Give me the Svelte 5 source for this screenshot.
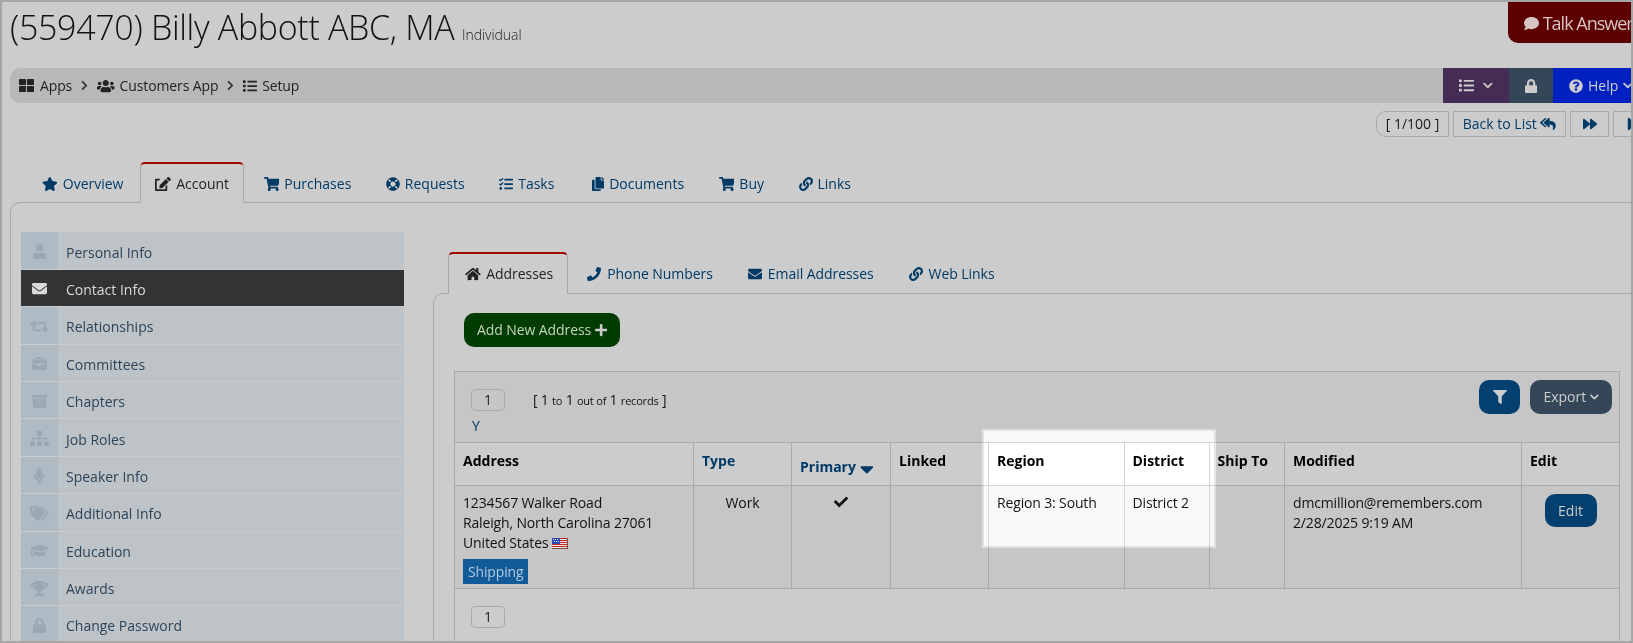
<script>
  const icons = {
    star: [576, 'M259.3 17.8L194 150.2 47.9 171.5c-26.2 3.8-36.7 36.1-17.7 54.6l105.7 103-25 145.5c-4.5 26.3 23.2 46 46.4 33.7L288 439.6l130.7 68.7c23.2 12.2 50.9-7.4 46.4-33.7l-25-145.5 105.7-103c19-18.5 8.5-50.8-17.7-54.6L382 150.2 316.7 17.8c-11.7-23.6-45.6-23.9-57.4 0z'],
    cart: [576, 'M528.12 301.319l47.273-208C578.806 78.301 567.391 64 551.99 64H159.208l-9.166-44.81C147.758 8.021 137.93 0 126.529 0H24C10.745 0 0 10.745 0 24v16c0 13.255 10.745 24 24 24h69.883l70.248 343.435C147.325 417.1 136 435.222 136 456c0 30.928 25.072 56 56 56s56-25.072 56-56c0-15.674-6.447-29.835-16.824-40h209.647C430.447 426.165 424 440.326 424 456c0 30.928 25.072 56 56 56s56-25.072 56-56c0-22.172-12.888-41.332-31.579-50.405l5.517-24.276c3.413-15.018-8.002-29.319-23.403-29.319H218.117l-6.545-32h293.145c11.206 0 20.92-7.754 23.403-18.681z'],
    envelope: [512, 'M502.3 190.8c3.9-3.1 9.7-.2 9.7 4.7V400c0 26.5-21.5 48-48 48H48c-26.5 0-48-21.5-48-48V195.6c0-5 5.7-7.8 9.7-4.7 22.4 17.4 52.1 39.5 154.1 113.6 21.1 15.4 56.7 47.8 92.2 47.6 35.7.3 72-32.8 92.3-47.6 102-74.1 131.6-96.3 154-113.7zM256 320c23.2.4 56.6-29.2 73.4-41.4 132.7-96.3 142.8-104.7 173.4-128.7 5.8-4.5 9.2-11.5 9.2-18.9v-19c0-26.5-21.5-48-48-48H48C21.5 64 0 85.5 0 112v19c0 7.4 3.4 14.3 9.2 18.9 30.6 23.9 40.7 32.4 173.4 128.7 16.8 12.2 50.2 41.8 73.4 41.4z'],
    check: [512, 'M173.898 439.404l-166.4-166.4c-9.997-9.997-9.997-26.206 0-36.204l36.203-36.204c9.997-9.998 26.207-9.998 36.204 0L192 312.69 432.095 72.596c9.997-9.997 26.207-9.997 36.204 0l36.203 36.204c9.997 9.997 9.997 26.206 0 36.204l-294.4 294.401c-9.998 9.997-26.207 9.997-36.204-.001z'],
    plus: [448, 'M416 208H272V64c0-17.67-14.33-32-32-32h-32c-17.67 0-32 14.33-32 32v144H32c-17.67 0-32 14.33-32 32v32c0 17.67 14.33 32 32 32h144v144c0 17.67 14.33 32 32 32h32c17.67 0 32-14.33 32-32V304h144c17.67 0 32-14.33 32-32v-32c0-17.67-14.33-32-32-32z'],
    user: [448, 'M224 256c70.7 0 128-57.3 128-128S294.7 0 224 0 96 57.3 96 128s57.3 128 128 128zm89.6 32h-16.7c-22.2 10.2-46.9 16-72.9 16s-50.6-5.8-72.9-16h-16.7C60.2 288 0 348.2 0 422.4V464c0 26.5 21.5 48 48 48h352c26.5 0 48-21.5 48-48v-41.6c0-74.2-60.2-134.4-134.4-134.4z'],
    link: [512, 'M326.612 185.391c59.747 59.809 58.927 155.698.36 214.59-.11.12-.24.25-.36.37l-67.2 67.2c-59.27 59.27-155.699 59.262-214.96 0-59.27-59.26-59.27-155.7 0-214.96l37.106-37.106c9.84-9.84 26.786-3.3 27.294 10.606.648 17.722 3.826 35.527 9.69 52.721 1.986 5.822.567 12.262-3.783 16.612l-13.087 13.087c-28.026 28.026-28.905 73.66-1.155 101.96 28.024 28.579 74.086 28.749 102.325.51l67.2-67.19c28.191-28.191 28.073-73.757 0-101.83-3.701-3.694-7.429-6.564-10.341-8.569a16.037 16.037 0 0 1-6.947-12.606c-.396-10.567 3.348-21.456 11.698-29.806l21.054-21.055c5.521-5.521 14.182-6.199 20.584-1.731a152.482 152.482 0 0 1 20.522 17.197zM467.547 44.449c-59.261-59.262-155.69-59.27-214.96 0l-67.2 67.2c-.12.12-.25.25-.36.37-58.566 58.892-59.387 154.781.36 214.59a152.454 152.454 0 0 0 20.521 17.196c6.402 4.468 15.064 3.789 20.584-1.731l21.054-21.055c8.35-8.35 12.094-19.239 11.698-29.806a16.037 16.037 0 0 0-6.947-12.606c-2.912-2.005-6.64-4.875-10.341-8.569-28.073-28.073-28.191-73.639 0-101.83l67.2-67.19c28.239-28.239 74.3-28.069 102.325.51 27.75 28.3 26.872 73.934-1.155 101.96l-13.087 13.087c-4.35 4.35-5.769 10.79-3.783 16.612 5.864 17.194 9.042 34.999 9.69 52.721.509 13.906 17.454 20.446 27.294 10.606l37.106-37.106c59.271-59.259 59.271-155.699.001-214.959z'],
    lock: [448, 'M400 224h-24v-72C376 68.2 307.8 0 224 0S72 68.2 72 152v72H48c-26.5 0-48 21.5-48 48v192c0 26.5 21.5 48 48 48h352c26.5 0 48-21.5 48-48V272c0-26.5-21.5-48-48-48zm-104 0H152v-72c0-39.7 32.3-72 72-72s72 32.3 72 72v72z'],
    filter: [512, 'M487.976 0H24.028C2.71 0-8.047 25.866 7.058 40.971L192 225.941V432c0 7.831 3.821 15.17 10.237 19.662l80 55.98C298.02 518.69 320 507.493 320 487.98V225.941l184.947-184.97C520.021 25.896 509.338 0 487.976 0z'],
    down: [448, 'M207.029 381.476L12.686 187.132c-9.373-9.373-9.373-24.569 0-33.941l22.667-22.667c9.357-9.357 24.522-9.375 33.901-.04L224 284.505l154.745-154.021c9.379-9.335 24.544-9.317 33.901.04l22.667 22.667c9.373 9.373 9.373 24.569 0 33.941L240.971 381.476c-9.373 9.372-24.569 9.372-33.942 0z'],
    right: [320, 'M285.476 272.971L91.132 467.314c-9.373 9.373-24.569 9.373-33.941 0l-22.667-22.667c-9.357-9.357-9.375-24.522-.04-33.901L188.505 256 34.484 101.255c-9.335-9.379-9.317-24.544.04-33.901l22.667-22.667c9.373-9.373 24.569-9.373 33.941 0L285.475 239.03c9.373 9.372 9.373 24.568.001 33.941z'],
    grid: [512, 'M296 32h192c13.255 0 24 10.745 24 24v160c0 13.255-10.745 24-24 24H296c-13.255 0-24-10.745-24-24V56c0-13.255 10.745-24 24-24zm-80 0H24C10.745 32 0 42.745 0 56v160c0 13.255 10.745 24 24 24h192c13.255 0 24-10.745 24-24V56c0-13.255-10.745-24-24-24zM0 296v160c0 13.255 10.745 24 24 24h192c13.255 0 24-10.745 24-24V296c0-13.255-10.745-24-24-24H24c-13.255 0-24 10.745-24 24zm296 184h192c13.255 0 24-10.745 24-24V296c0-13.255-10.745-24-24-24H296c-13.255 0-24 10.745-24 24v160c0 13.255 10.745 24 24 24z'],
    users: [640, 'M96 224c35.3 0 64-28.7 64-64s-28.7-64-64-64-64 28.7-64 64 28.7 64 64 64zm448 0c35.3 0 64-28.7 64-64s-28.7-64-64-64-64 28.7-64 64 28.7 64 64 64zm32 32h-64c-17.6 0-33.5 7.1-45.1 18.6 40.3 22.1 68.9 62 75.1 109.4h66c17.7 0 32-14.3 32-32v-32c0-35.3-28.7-64-64-64zm-256 0c61.9 0 112-50.1 112-112S381.9 32 320 32 208 82.1 208 144s50.1 112 112 112zm76.8 32h-8.3c-20.8 10-43.9 16-68.5 16s-47.6-6-68.5-16h-8.3C179.6 288 128 339.6 128 403.2V432c0 26.5 21.5 48 48 48h288c26.5 0 48-21.5 48-48v-28.8c0-63.6-51.6-115.2-115.2-115.2zm-223.7-13.4C161.5 263.1 145.6 256 128 256H64c-35.3 0-64 28.7-64 64v32c0 17.7 14.3 32 32 32h65.9c6.3-47.4 34.9-87.3 75.2-109.4z'],
    list: [512, 'M80 368H16a16 16 0 0 0-16 16v64a16 16 0 0 0 16 16h64a16 16 0 0 0 16-16v-64a16 16 0 0 0-16-16zm0-320H16A16 16 0 0 0 0 64v64a16 16 0 0 0 16 16h64a16 16 0 0 0 16-16V64a16 16 0 0 0-16-16zm0 160H16a16 16 0 0 0-16 16v64a16 16 0 0 0 16 16h64a16 16 0 0 0 16-16v-64a16 16 0 0 0-16-16zm416 176H176a16 16 0 0 0-16 16v32a16 16 0 0 0 16 16h320a16 16 0 0 0 16-16v-32a16 16 0 0 0-16-16zm0-320H176a16 16 0 0 0-16 16v32a16 16 0 0 0 16 16h320a16 16 0 0 0 16-16V80a16 16 0 0 0-16-16zm0 160H176a16 16 0 0 0-16 16v32a16 16 0 0 0 16 16h320a16 16 0 0 0 16-16v-32a16 16 0 0 0-16-16z'],
    comment: [512, 'M256 32C114.6 32 0 125.1 0 240c0 49.6 21.4 95 57 130.7C44.5 421.1 2.7 466 2.2 466.5c-2.2 2.3-2.8 5.7-1.5 8.7S4.8 480 8 480c66.3 0 116-31.8 140.6-51.4 32.7 12.3 69 19.4 107.4 19.4 141.4 0 256-93.1 256-208S397.4 32 256 32z'],
    help: [512, 'M504 256c0 136.997-111.043 248-248 248S8 392.997 8 256C8 119.083 119.043 8 256 8s248 111.083 248 248zM262.655 90c-54.497 0-89.255 22.957-116.549 63.758-3.536 5.286-2.353 12.415 2.715 16.258l34.699 26.31c5.205 3.947 12.621 3.008 16.665-2.122 17.864-22.658 30.113-35.797 57.303-35.797 20.429 0 45.698 13.148 45.698 32.958 0 14.976-12.363 22.667-32.534 33.976C247.128 238.528 216 254.941 216 296v4c0 6.627 5.373 12 12 12h56c6.627 0 12-5.373 12-12v-1.333c0-28.462 83.186-29.647 83.186-106.667 0-58.002-60.165-102-116.531-102zM256 338c-25.365 0-46 20.635-46 46 0 25.364 20.635 46 46 46s46-20.636 46-46c0-25.365-20.635-46-46-46z'],
    forward: [512, 'M500.5 231.4l-192-160C287.9 54.3 256 68.6 256 96v320c0 27.4 31.9 41.8 52.5 24.6l192-160c15.3-12.8 15.3-36.4 0-49.2zm-256 0l-192-160C31.9 54.3 0 68.6 0 96v320c0 27.4 31.9 41.8 52.5 24.6l192-160c15.3-12.8 15.3-36.4 0-49.2z'],
    step: [448, 'M384 44v424c0 6.6-5.4 12-12 12h-48c-6.6 0-12-5.4-12-12V291.6l-195.5 181C95.9 489.7 64 475.4 64 448V64c0-27.4 31.9-41.7 52.5-24.6L312 219.3V44c0-6.6 5.4-12 12-12h48c6.6 0 12 5.4 12 12z'],
    replyall: [576, 'M136.309 189.836L312.313 37.851C327.72 24.546 352 35.348 352 56.015v82.763c129.182 10.231 224 52.212 224 183.548 0 61.441-39.582 122.309-83.333 154.132-13.653 9.931-33.111-2.533-28.077-18.631 38.512-123.162-3.922-169.482-112.59-182.015v84.175c0 20.701-24.3 31.453-39.687 18.164L136.309 226.164c-11.071-9.561-11.086-26.753 0-36.328zm-128 36.328L184.313 378.149C199.7 391.439 224 380.687 224 359.986v-15.818l-108.606-93.785A55.96 55.96 0 0 1 96 207.998a55.953 55.953 0 0 1 19.393-42.38L224 71.832V56.015c0-20.667-24.28-31.469-39.687-18.164L8.309 189.836c-11.086 9.575-11.071 26.767 0 36.328z'],
    edit: [576, 'M402.6 83.2l90.2 90.2c3.8 3.8 3.8 10 0 13.8L274.4 405.6l-92.8 10.3c-12.4 1.4-22.9-9.1-21.5-21.5l10.3-92.8L388.8 83.2c3.8-3.8 10-3.8 13.8 0zm162-22.9l-48.8-48.8c-15.2-15.2-39.9-15.2-55.2 0l-35.4 35.4c-3.8 3.8-3.8 10 0 13.8l90.2 90.2c3.8 3.8 10 3.8 13.8 0l35.4-35.4c15.2-15.3 15.2-40 0-55.2zM384 346.2V448H64V128h73.1c3.2 0 6.2-1.3 8.5-3.5l40-40c7.6-7.6 2.2-20.5-8.5-20.5H48C21.5 64 0 85.5 0 112v352c0 26.5 21.5 48 48 48h352c26.5 0 48-21.5 48-48V306.2c0-10.7-12.9-16-20.5-8.5l-40 40c-2.2 2.3-3.5 5.3-3.5 8.5z'],
    lifering: [512, 'M256 8C119.033 8 8 119.033 8 256s111.033 248 248 248 248-111.033 248-248S392.967 8 256 8zm173.696 119.559l-63.399 63.399c-10.987-18.559-26.67-34.252-45.255-45.255l63.399-63.399a218.396 218.396 0 0 1 45.255 45.255zM256 352c-53.019 0-96-42.981-96-96s42.981-96 96-96 96 42.981 96 96-42.981 96-96 96zM127.559 82.304l63.399 63.399c-18.559 10.987-34.252 26.67-45.255 45.255l-63.399-63.399a218.372 218.372 0 0 1 45.255-45.255zM82.304 384.441l63.399-63.399c10.987 18.559 26.67 34.252 45.255 45.255l-63.399 63.399a218.396 218.396 0 0 1-45.255-45.255zm302.137 45.255l-63.399-63.399c18.559-10.987 34.252-26.67 45.255-45.255l63.399 63.399a218.403 218.403 0 0 1-45.255 45.255z'],
    tasks: [512, 'M139.61 35.5a12 12 0 0 0-17 0L58.93 98.81l-22.7-22.12a12 12 0 0 0-17 0L3.53 92.41a12 12 0 0 0 0 17l47.59 47.4a12.78 12.78 0 0 0 17.61 0l15.59-15.62L156.52 69a12.09 12.09 0 0 0 .09-17zm0 159.19a12 12 0 0 0-17 0l-63.68 63.72-22.7-22.1a12 12 0 0 0-17 0L3.53 252a12 12 0 0 0 0 17L51 316.5a12.77 12.77 0 0 0 17.6 0l15.7-15.69 72.2-72.22a12 12 0 0 0 .09-16.9zM64 368c-26.49 0-48.59 21.5-48.59 48S37.53 464 64 464a48 48 0 0 0 0-96zm432 16H208a16 16 0 0 0-16 16v32a16 16 0 0 0 16 16h288a16 16 0 0 0 16-16v-32a16 16 0 0 0-16-16zm0-320H208a16 16 0 0 0-16 16v32a16 16 0 0 0 16 16h288a16 16 0 0 0 16-16V80a16 16 0 0 0-16-16zm0 160H208a16 16 0 0 0-16 16v32a16 16 0 0 0 16 16h288a16 16 0 0 0 16-16v-32a16 16 0 0 0-16-16z'],
    copy: [448, 'M320 448v40c0 13.255-10.745 24-24 24H24c-13.255 0-24-10.745-24-24V120c0-13.255 10.745-24 24-24h72v296c0 30.879 25.121 56 56 56h168zm0-344V0H152c-13.255 0-24 10.745-24 24v368c0 13.255 10.745 24 24 24h272c13.255 0 24-10.745 24-24V128H344c-13.2 0-24-10.8-24-24zm120.971-31.029L375.029 7.029A24 24 0 0 0 358.059 0H352v96h96v-6.059a24 24 0 0 0-7.029-16.97z'],
    home: [576, 'M280.37 148.26L96 300.11V464a16 16 0 0 0 16 16l112.06-.29a16 16 0 0 0 15.92-16V368a16 16 0 0 1 16-16h64a16 16 0 0 1 16 16v95.64a16 16 0 0 0 16 16.05L464 480a16 16 0 0 0 16-16V300L295.67 148.26a12.19 12.19 0 0 0-15.3 0zM571.6 251.47L488 182.56V44.05a12 12 0 0 0-12-12h-56a12 12 0 0 0-12 12v72.61L318.47 43a48 48 0 0 0-61 0L4.34 251.47a12 12 0 0 0-1.6 16.9l25.5 31A12 12 0 0 0 45.15 301l235.22-193.74a12.19 12.19 0 0 1 15.3 0L530.9 301a12 12 0 0 0 16.9-1.6l25.5-31a12 12 0 0 0-1.7-16.93z'],
    phone: [512, 'M493.4 24.6l-104-24c-11.3-2.6-22.9 3.3-27.5 13.9l-48 112c-4.2 9.8-1.4 21.3 6.9 28l60.6 49.6c-36 76.7-98.9 140.5-177.2 177.2l-49.6-60.6c-6.8-8.3-18.2-11.1-28-6.9l-112 48C3.9 366.5-2 378.1.6 389.4l24 104C27.1 504.2 36.7 512 48 512c256.1 0 464-207.5 464-464 0-11.2-7.7-20.9-18.6-23.4z'],
    retweet: [640, 'M629.657 343.598L528.971 444.284c-9.373 9.372-24.568 9.372-33.941 0L394.343 343.598c-9.373-9.373-9.373-24.569 0-33.941l10.823-10.823c9.562-9.562 25.133-9.34 34.419.492L480 342.118V160H292.451a24.005 24.005 0 0 1-16.971-7.029l-16-16C244.361 121.851 255.069 96 276.451 96H520c13.255 0 24 10.745 24 24v222.118l40.416-42.792c9.285-9.831 24.856-10.054 34.419-.492l10.823 10.823c9.372 9.372 9.372 24.569-.001 33.941zm-265.138 15.431A23.999 23.999 0 0 0 347.548 352H160V169.881l40.416 42.792c9.286 9.831 24.856 10.054 34.419.491l10.822-10.822c9.373-9.373 9.373-24.569 0-33.941L144.971 67.716c-9.373-9.373-24.569-9.373-33.941 0L10.343 168.402c-9.373 9.373-9.373 24.569 0 33.941l10.822 10.822c9.563 9.563 25.134 9.34 34.419-.491L96 169.881V392c0 13.255 10.745 24 24 24h243.549c21.382 0 32.09-25.851 16.971-40.971l-16.001-16z'],
    briefcase: [512, 'M320 336c0 8.84-7.16 16-16 16h-96c-8.84 0-16-7.16-16-16v-48H0v144c0 25.6 22.4 48 48 48h416c25.6 0 48-22.4 48-48V288H320v48zm144-208h-80V80c0-25.6-22.4-48-48-48H176c-25.6 0-48 22.4-48 48v48H48c-25.6 0-48 22.4-48 48v80h512v-80c0-25.6-22.4-48-48-48zm-144 0H192V96h128v32z'],
    archive: [512, 'M32 448c0 17.7 14.3 32 32 32h384c17.7 0 32-14.3 32-32V160H32v288zm160-212c0-6.6 5.4-12 12-12h104c6.6 0 12 5.4 12 12v8c0 6.6-5.4 12-12 12H204c-6.6 0-12-5.4-12-12v-8zM480 32H32C14.3 32 0 46.3 0 64v48c0 8.8 7.2 16 16 16h480c8.8 0 16-7.2 16-16V64c0-17.7-14.3-32-32-32z'],
    sitemap: [640, 'M128 352H32c-17.67 0-32 14.33-32 32v96c0 17.67 14.33 32 32 32h96c17.67 0 32-14.33 32-32v-96c0-17.67-14.33-32-32-32zm-24-80h192v48h48v-48h192v48h48v-57.59c0-21.17-17.23-38.41-38.41-38.41H344v-64h40c17.67 0 32-14.33 32-32V32c0-17.67-14.33-32-32-32H256c-17.67 0-32 14.33-32 32v96c0 17.67 14.33 32 32 32h40v64H94.41C73.23 224 56 241.23 56 262.41V320h48v-48zm264 80h-96c-17.67 0-32 14.33-32 32v96c0 17.67 14.33 32 32 32h96c17.67 0 32-14.33 32-32v-96c0-17.67-14.33-32-32-32zm240 0h-96c-17.67 0-32 14.33-32 32v96c0 17.67 14.33 32 32 32h96c17.67 0 32-14.33 32-32v-96c0-17.67-14.33-32-32-32z'],
    mic: [352, 'M176 352c53.02 0 96-42.98 96-96V96c0-53.02-42.98-96-96-96S80 42.98 80 96v160c0 53.02 42.98 96 96 96zm160-160h-16c-8.84 0-16 7.16-16 16v48c0 74.8-64.49 134.82-140.79 127.38C96.71 376.89 48 317.11 48 250.3V208c0-8.84-7.16-16-16-16H16c-8.84 0-16 7.16-16 16v40.16c0 89.64 63.97 169.55 152 181.69V464H96c-8.84 0-16 7.16-16 16v16c0 8.84 7.16 16 16 16h160c8.84 0 16-7.16 16-16v-16c0-8.84-7.16-16-16-16h-56v-33.77C285.71 418.47 352 344.9 352 256v-48c0-8.84-7.16-16-16-16z'],
    tags: [640, 'M497.941 225.941L286.059 14.059A48 48 0 0 0 252.118 0H48C21.49 0 0 21.49 0 48v204.118a48 48 0 0 0 14.059 33.941l211.882 211.882c18.744 18.745 49.136 18.746 67.882 0l204.118-204.118c18.745-18.745 18.745-49.137 0-67.882zM112 160c-26.51 0-48-21.49-48-48s21.49-48 48-48 48 21.49 48 48-21.49 48-48 48zm513.941 133.823L421.823 497.941c-18.745 18.745-49.137 18.745-67.882 0l-.36-.36L527.64 323.522c16.999-16.999 26.36-39.6 26.36-63.64s-9.362-46.641-26.36-63.64L331.397 0h48.721a48 48 0 0 1 33.941 14.059l211.882 211.882c18.745 18.745 18.745 49.137 0 67.882z'],
    cap: [640, 'M622.34 153.2L343.4 67.5c-15.2-4.67-31.6-4.67-46.79 0L17.66 153.2c-23.54 7.23-23.54 38.36 0 45.59l48.63 14.94c-10.67 13.19-17.23 29.28-17.88 46.9C38.78 266.15 32 276.11 32 288c0 10.78 5.68 19.85 13.86 25.65L20.33 428.53C18.11 438.52 25.71 448 35.94 448h56.11c10.24 0 17.84-9.48 15.62-19.47L82.14 313.65C90.32 307.85 96 298.78 96 288c0-11.57-6.47-21.25-15.66-26.87.76-15.02 8.44-28.3 20.69-36.72L296.6 284.5c9.06 2.78 26.44 6.25 46.79 0l278.95-85.7c23.55-7.24 23.55-38.36 0-45.6zM352.79 315.09c-28.53 8.76-52.84 3.92-65.59 0l-145.02-44.55L128 384c0 35.35 85.96 64 192 64s192-28.65 192-64l-14.18-113.47-145.03 44.56z'],
    trophy: [576, 'M552 64H448V24c0-13.3-10.7-24-24-24H152c-13.3 0-24 10.7-24 24v40H24C10.7 64 0 74.7 0 88v56c0 35.7 22.5 72.4 61.9 100.7 31.5 22.7 69.8 37.1 110 41.7C203.3 338.5 240 360 240 360v72h-48c-35.3 0-64 20.7-64 56v12c0 6.6 5.4 12 12 12h296c6.6 0 12-5.4 12-12v-12c0-35.3-28.7-56-64-56h-48v-72s36.7-21.5 68.1-73.6c40.3-4.6 78.6-19 110-41.7 39.3-28.3 61.9-65 61.9-100.7V88c0-13.3-10.7-24-24-24zM99.3 192.8C74.9 175.2 64 155.6 64 144v-16h64.2c1 32.6 5.8 61.2 12.8 86.2-15.1-5.2-29.2-12.4-41.7-21.4zM512 144c0 16.1-17.7 36.1-35.3 48.8-12.5 9-26.7 16.2-41.8 21.4 7-25 11.8-53.6 12.8-86.2H512v16z'],
    caret: [320, 'M31.3 192h257.3c17.8 0 26.7 21.5 14.1 34.1L174.1 354.8c-7.8 7.8-20.5 7.8-28.3 0L17.2 226.1C4.6 213.5 13.5 192 31.3 192z'],
  };

  const tabs = [
    ['star', 'Overview'], ['edit', 'Account'], ['cart', 'Purchases'], ['lifering', 'Requests'],
    ['tasks', 'Tasks'], ['copy', 'Documents'], ['cart', 'Buy'], ['link', 'Links'],
  ];
  const subTabs = [['home', 'Addresses'], ['phone', 'Phone Numbers'], ['envelope', 'Email Addresses'], ['link', 'Web Links']];
  const side = [
    ['user', 'Personal Info'], ['envelope', 'Contact Info'], ['retweet', 'Relationships'], ['briefcase', 'Committees'],
    ['archive', 'Chapters'], ['sitemap', 'Job Roles'], ['mic', 'Speaker Info'], ['tags', 'Additional Info'],
    ['cap', 'Education'], ['trophy', 'Awards'], ['lock', 'Change Password'],
  ];
</script>

{#snippet fa(name)}
  <svg class="fa" width="{icons[name][0] / 512}em" height="1em" viewBox="0 0 {icons[name][0]} 512" aria-hidden="true"><path d={icons[name][1]} /></svg>
{/snippet}

<div class="frame">
  <header class="top">
    <h1>(559470) Billy Abbott ABC, MA <small>Individual</small></h1>
    <button class="talk">{@render fa('comment')} Talk Answers</button>
  </header>

  <nav class="crumbs">
    <div class="trail">
      <span class="big">{@render fa('grid')}</span><span>Apps</span><span class="sep">{@render fa('right')}</span>
      {@render fa('users')}<span>Customers App</span><span class="sep">{@render fa('right')}</span>
      {@render fa('list')}<span>Setup</span>
    </div>
    <div class="menus">
      <div class="m purple">{@render fa('list')}<span class="chev">{@render fa('down')}</span></div>
      <div class="m slate">{@render fa('lock')}</div>
      <div class="m blue">{@render fa('help')}<span>Help</span><span class="chev">{@render fa('down')}</span></div>
    </div>
  </nav>

  <div class="pager">
    <span class="count">[ 1/100 ]</span>
    <button class="pbtn back">Back to List {@render fa('replyall')}</button>
    <button class="pbtn ico">{@render fa('forward')}</button>
    <button class="pbtn ico">{@render fa('step')}</button>
  </div>

  <div class="tabs">
    {#each tabs as [ic, label], i}
      <div class="tab" class:active={i === 1}>{@render fa(ic)}<span>{label}</span></div>
    {/each}
  </div>

  <section class="panel">
    <aside class="side">
      {#each side as [ic, label], i}
        <div class="row" class:on={i === 1}>
          <span class="tile">{@render fa(ic)}</span><span class="lbl">{label}</span>
        </div>
      {/each}
    </aside>

    <div class="main">
      <div class="tabs sub">
        {#each subTabs as [ic, label], i}
          <div class="tab" class:active={i === 0}>{@render fa(ic)}<span>{label}</span></div>
        {/each}
      </div>
      <div class="inner">
        <button class="add">Add New Address {@render fa('plus')}</button>

        <div class="grid">
          <div class="bar">
            <div class="left">
              <div class="line">
                <span class="pg">1</span>
                <span class="rec">[ 1 <i>to</i> 1 <i>out of</i> 1 <i>records</i> ]</span>
              </div>
              <span class="y">Y</span>
            </div>
            <div class="tools">
              <button class="filter">{@render fa('filter')}</button>
              <button class="export">Export {@render fa('down')}</button>
            </div>
          </div>

          <table>
            <colgroup>
              <col style="width:238.5px" /><col style="width:98px" /><col style="width:99px" /><col style="width:98px" />
              <col style="width:135.5px" /><col style="width:85px" /><col style="width:75.5px" /><col style="width:237px" /><col />
            </colgroup>
            <thead>
              <tr>
                <th>Address</th>
                <th class="lnk">Type</th>
                <th class="lnk low">Primary {@render fa('caret')}</th>
                <th>Linked</th><th>Region</th><th>District</th><th>Ship To</th><th>Modified</th><th>Edit</th>
              </tr>
            </thead>
            <tbody>
              <tr>
                <td>
                  1234567 Walker Road<br />Raleigh, North Carolina 27061<br />United States
                  <svg class="flag" width="16" height="11" viewBox="0 0 16 11" aria-hidden="true">
                    <rect width="16" height="11" fill="#e6e6e6" />
                    <path d="M0 0h16v1H0zM0 2h16v1H0zM0 4h16v1H0zM0 6h16v1H0zM0 8h16v1H0zM0 10h16v1H0z" fill="#c8281f" />
                    <rect width="8" height="6" fill="#2a49b0" />
                    <path d="M1 1h1v1H1zM3 1h1v1H3zM5 1h1v1H5zM2 3h1v1H2zM4 3h1v1H4zM6 3h1v1H6z" fill="#dfe4f0" />
                    <path d="M15.5 0v10.5H0" fill="none" stroke="#7a5048" />
                  </svg>
                  <span class="ship">Shipping</span>
                </td>
                <td class="c">Work</td>
                <td class="c chk">{@render fa('check')}</td>
                <td></td>
                <td>Region 3: South</td>
                <td>District 2</td>
                <td></td>
                <td>dmcmillion@remembers.com<br />2/28/2025 9:19 AM</td>
                <td class="c"><button class="edit">Edit</button></td>
              </tr>
            </tbody>
          </table>

          <div class="foot"><span class="pg">1</span></div>
        </div>
      </div>
    </div>
  </section>

  <!-- spotlight: dodging by the 20% dim brings the original page colours back -->
  <div class="spot"></div>
</div>

<style>
  :global(body) { margin: 0; background: #ccc; }
  .frame { position: relative; isolation: isolate; box-sizing: border-box; width: 1633px; height: 643px; overflow: hidden;
    border: 2px solid #a6a6a6; background: #ccc; color: #111; font: 14px/20px "Open Sans", sans-serif; }
  .fa { fill: currentColor; vertical-align: -0.125em; flex: none; }
  button { font: inherit; cursor: pointer; }

  .top { display: flex; justify-content: space-between; height: 66px; }
  h1 { margin: 0; padding: 2px 0 0 8px; font-size: 34px; line-height: 46px; font-weight: 300; letter-spacing: -0.32px; white-space: nowrap; color: #111; }
  h1 small { font-size: 14px; font-weight: 300; letter-spacing: -0.05px; margin-left: -1px; color: #222; }
  .talk { width: 140px; height: 41px; flex: none; margin-right: -17px; padding: 0 0 0 16px; border: 0; border-radius: 0 0 0 10px; background: #5c0000;
    color: #d9c4c4; font-size: 18px; letter-spacing: -1px; text-align: left; white-space: nowrap; }
  .talk .fa { font-size: 15px; }

  .crumbs { display: flex; justify-content: space-between; height: 35px; margin-left: 8px; border-radius: 10px 0 0 10px; background: #b8b8b8; }
  .trail { display: flex; align-items: center; gap: 5px; padding-left: 9px; color: #222; letter-spacing: -0.12px; }
  .trail .big { display: flex; font-size: 15px; margin-right: 1px; }
  .trail .sep { margin: 0 4px; display: flex; font-size: 11px; color: #333; }
  .menus { display: flex; }
  .m { display: flex; align-items: center; justify-content: center; color: #ccc; }
  .purple { width: 66px; gap: 9px; background: #452c55; font-size: 15px; }
  .slate { width: 44px; background: #344658; }
  .blue { width: 78px; gap: 5px; padding-left: 16px; justify-content: flex-start; box-sizing: border-box; background: #0020bf; }
  .chev { display: flex; font-size: 11px; }

  .pager { display: flex; justify-content: flex-end; gap: 4px; margin: 8px -21px 0 0; height: 26px; }
  .count, .pbtn { box-sizing: border-box; height: 26px; border: 1px solid #aaa; background: transparent; line-height: 24px; }
  .count { width: 73px; text-align: center; border-radius: 10px 0 0 10px; color: #1a1a1a; }
  .pbtn { padding: 0; color: #003a66; }
  .back { width: 113px; white-space: nowrap; }
  .ico { width: 39px; }

  .tabs { display: flex; margin-top: 25px; padding-left: 25px; height: 40px; }
  .tab { display: flex; align-items: center; gap: 5px; box-sizing: border-box; height: 41px; margin-right: 4.5px; padding: 2px 15px 0; color: #003a66; white-space: nowrap; position: relative; z-index: 1; }
  .tab:first-child { margin-right: 2px; }
  .tab:nth-child(5) { margin-right: 7.5px; }
  .tab.active { border: 1px solid #aaa; border-top: 2px solid #a00000; border-bottom: 0; border-radius: 5px 5px 0 0; background: #ccc; color: #222; padding: 1px 14px 0; }

  .panel { display: flex; height: 440px; margin-left: 8px; padding: 29px 0 0 10px; box-sizing: border-box; border-top: 1px solid #aaa; border-left: 1px solid #aaa; border-top-left-radius: 10px; }
  .side { width: 383px; flex: none; margin-top: 0.4px; }
  .row { display: flex; align-items: stretch; box-sizing: border-box; height: 37.4px; border-bottom: 1px solid #ccc; background: #bdc3c7; color: #2d4459; }
  .tile { display: flex; align-items: center; justify-content: center; box-sizing: border-box; width: 37px; padding-top: 2px; flex: none; background: #aebbc4; color: #98a8b5; font-size: 15px; }
  .lbl { display: flex; align-items: center; padding: 4px 0 0 8px; }
  .row.on { background: #333; color: #d9d9d9; }
  .row.on .tile { background: #333; color: #d9d9d9; }

  .main { flex: 1; min-width: 0; margin-left: 29px; padding-top: 20px; }
  .sub { margin-top: 0; padding-left: 15px; height: 41px; }
  .sub .tab { height: 42px; margin-right: 5px; gap: 6px; letter-spacing: -0.06px; }
  .sub .tab.active { margin-right: 4px; gap: 5.5px; padding: 0 14px 0 16px; }
  .inner { box-sizing: border-box; height: 360px; padding: 19px 11px 0 20px; border-top: 1px solid #aaa; border-left: 1px solid #aaa; border-top-left-radius: 10px; }
  .add { display: block; height: 34px; width: 156px; margin-left: 10px; padding: 0; border: 0; border-radius: 10px; background: #003c00; color: #c4d4bc; letter-spacing: -0.08px; white-space: nowrap; }
  .add .fa { color: #ccc; font-size: 14px; }

  .grid { margin-top: 24px; box-sizing: border-box; border: 1px solid #aaa; height: 290px; }
  .bar { display: flex; justify-content: space-between; height: 70px; box-sizing: border-box; padding: 8px 7px 0 16px; background: #c6c6c6; }
  .line { display: flex; align-items: center; gap: 28px; margin-top: 8px; }
  .pg { display: inline-block; box-sizing: border-box; width: 34px; height: 22px; border: 1px solid #aaa; border-radius: 4px; text-align: center; line-height: 20px; color: #222; }
  .rec { color: #111; letter-spacing: -0.2px; padding-top: 2px; }
  .rec i { font-style: normal; font-size: 11px; }
  .y { display: block; margin: 5px 0 0 1px; color: #003a66; }
  .tools { display: flex; gap: 10px; }
  .filter, .export { height: 34px; padding: 0; border: 0; border-radius: 10px; color: #ccc; }
  .filter { width: 41px; background: #04406f; }
  .export { width: 82px; background: #344658; }
  .export .fa { font-size: 10px; vertical-align: 0; }

  table { width: 100%; border-collapse: collapse; table-layout: fixed; }
  th, td { border: 1px solid #aaa; padding: 8px; text-align: left; vertical-align: top; }
  th:first-child, td:first-child { border-left: 0; }
  th:last-child, td:last-child { border-right: 0; }
  th { height: 40px; box-sizing: border-box; font-weight: 700; background: #ccc; color: #000; padding-top: 8px; }
  th.lnk { color: #003a66; }
  th.low { padding-top: 14px; }
  th.low .fa { font-size: 22px; vertical-align: -4px; margin: -4px 0 -4px 0; }
  tbody td { height: 103px; box-sizing: border-box; background: #c6c6c6; color: #111; padding: 7px 8px 3px; letter-spacing: -0.15px; }
  td.c { text-align: center; }
  td.chk .fa { vertical-align: -1px; }
  .flag { vertical-align: -1px; margin-left: 0; }
  .ship { display: block; width: max-content; height: 25px; margin-top: 6px; padding: 0 5px; background: #115b99; color: #b3c8db; line-height: 25px; }
  .edit { width: 52px; height: 33px; margin-top: 1px; padding: 0; border: 0; border-radius: 10px; background: #04406f; color: #ccc; }
  .foot { padding: 17px 0 0 16px; }

  .spot { position: absolute; left: 980px; top: 427px; width: 234px; height: 119px; box-sizing: border-box; pointer-events: none; z-index: 5;
    background: #333 padding-box; border: 2px solid #1e1e1e; mix-blend-mode: color-dodge; }
</style>
